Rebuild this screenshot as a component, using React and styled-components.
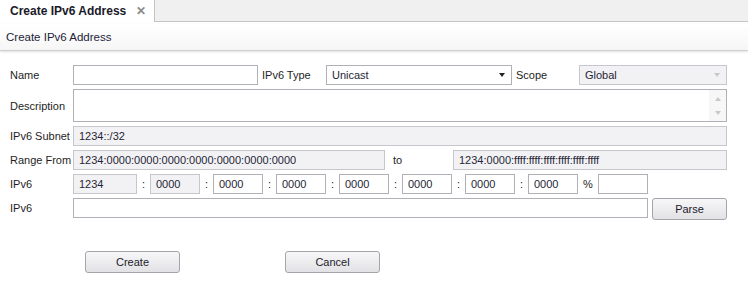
import React from 'react'
import styled, { createGlobalStyle } from 'styled-components'

const GlobalStyle = createGlobalStyle`
  html, body {
    margin: 0;
    padding: 0;
    background: #ffffff;
    font-family: "Liberation Sans", Arial, sans-serif;
    font-size: 11px;
    color: #222;
  }
`

const Page = styled.div`
  width: 748px;
  height: 283px;
  overflow: hidden;
  background: #fff;
`

const TabStrip = styled.div`
  display: flex;
  height: 22px;
  background: #f0f0f0;
`

const Tab = styled.div`
  width: 155px;
  display: flex;
  align-items: center;
  justify-content: space-between;
  padding: 0 8px 0 10px;
  box-sizing: border-box;
  background: #fff;
  border-right: 1px solid #c4c4c4;
  font-weight: bold;
  font-size: 12px;
  color: #1a1a2a;
`

const Close = styled.span`
  font-size: 12px;
  color: #8a8a8a;
  font-weight: bold;
`

const StripRest = styled.div`
  flex: 1;
  border-bottom: 1px solid #c4c4c4;
`

const Header = styled.div`
  height: 26px;
  margin-top: 2px;
  display: flex;
  align-items: center;
  padding-left: 6px;
  font-size: 11.5px;
  color: #1c2338;
  background: linear-gradient(#ffffff, #f6f6f6);
  border-bottom: 1px solid #cfcfcf;
  box-shadow: 0 1px 2px rgba(0, 0, 0, 0.12);
`

const Form = styled.div`
  display: flex;
  flex-direction: column;
  gap: 4px;
  padding: 14px 0 0 10px;
`

const Row = styled.div`
  display: flex;
  align-items: stretch;
  height: ${p => p.$h || 20}px;
`

const Label = styled.div`
  width: ${p => p.$w || 63}px;
  flex: none;
  display: flex;
  align-items: center;
  padding-left: ${p => p.$pl || 0}px;
  box-sizing: border-box;
  color: #1e1e1e;
`

const Field = styled.div`
  width: ${p => p.$w}px;
  flex: none;
  box-sizing: border-box;
  display: flex;
  align-items: center;
  padding-left: 5px;
  border: 1px solid ${p => (p.$disabled ? '#c6c6cc' : '#b0b0b6')};
  background: ${p => (p.$disabled ? '#f2f2f5' : '#fff')};
  color: #262636;
  position: relative;
`

const Arrow = styled.span`
  position: absolute;
  right: ${p => p.$r || 6}px;
  top: ${p => p.$t || 7}px;
  width: 0;
  height: 0;
  border-left: 3.5px solid transparent;
  border-right: 3.5px solid transparent;
  border-top: 4px solid ${p => p.$c || '#222'};
  border-bottom: 0;
  ${p => p.$up && `
    border-top: 0;
    border-bottom: 4px solid ${p.$c || '#222'};
  `}
`

const ScrollTrack = styled.div`
  position: absolute;
  right: 0;
  top: 0;
  bottom: 0;
  width: 17px;
  background: #f7f7f7;
`

const Sep = styled.div`
  width: ${p => p.$w || 13}px;
  flex: none;
  display: flex;
  align-items: center;
  justify-content: center;
  color: #1e1e1e;
`

const Gap = styled.div`
  width: ${p => p.$w}px;
  flex: none;
`

const Button = styled.button`
  width: ${p => p.$w}px;
  height: ${p => p.$h || 22}px;
  box-sizing: border-box;
  flex: none;
  border: 1px solid #a4a4aa;
  border-radius: 3px;
  background: linear-gradient(#f7f7f8, #e2e2e6);
  font-family: "Liberation Sans", Arial, sans-serif;
  font-size: 11px;
  color: #20202a;
  padding: 0;
`

const Buttons = styled.div`
  display: flex;
  gap: 105px;
  padding: 33px 0 0 85px;
`

const segs = ['0000', '0000', '0000', '0000', '0000', '0000']

export default function App() {
  return (
    <Page>
      <GlobalStyle />
      <TabStrip>
        <Tab>
          Create IPv6 Address
          <Close>✕</Close>
        </Tab>
        <StripRest />
      </TabStrip>
      <Header>Create IPv6 Address</Header>
      <Form>
        <Row>
          <Label>Name</Label>
          <Field $w={185} />
          <Label $w={68} $pl={4}>IPv6 Type</Label>
          <Field $w={186}>
            Unicast
            <Arrow />
          </Field>
          <Label $w={67} $pl={4}>Scope</Label>
          <Field $w={148} $disabled>
            Global
            <Arrow $c="#c8c8c8" />
          </Field>
        </Row>
        <Row $h={33}>
          <Label>Description</Label>
          <Field $w={654}>
            <ScrollTrack>
              <Arrow $up $c="#c8c8c8" $t={7} $r={5} />
              <Arrow $c="#c8c8c8" $t={21} $r={5} />
            </ScrollTrack>
          </Field>
        </Row>
        <Row>
          <Label>IPv6 Subnet</Label>
          <Field $w={654} $disabled>1234::/32</Field>
        </Row>
        <Row>
          <Label>Range From</Label>
          <Field $w={312} $disabled>1234:0000:0000:0000:0000:0000:0000:0000</Field>
          <Label $w={68} $pl={8}>to</Label>
          <Field $w={274} $disabled>1234:0000:ffff:ffff:ffff:ffff:ffff:ffff</Field>
        </Row>
        <Row>
          <Label>IPv6</Label>
          <Field $w={64} $disabled>1234</Field>
          <Sep>:</Sep>
          <Field $w={50} $disabled>0000</Field>
          {segs.map((s, i) => (
            <React.Fragment key={i}>
              <Sep>:</Sep>
              <Field $w={50}>{s}</Field>
            </React.Fragment>
          ))}
          <Sep $w={20}>%</Sep>
          <Field $w={50} />
        </Row>
        <Row $h={20}>
          <Label>IPv6</Label>
          <Field $w={575} />
          <Gap $w={4} />
          <Button $w={75} $h={22}>Parse</Button>
        </Row>
      </Form>
      <Buttons>
        <Button $w={95}>Create</Button>
        <Button $w={95}>Cancel</Button>
      </Buttons>
    </Page>
  )
}
